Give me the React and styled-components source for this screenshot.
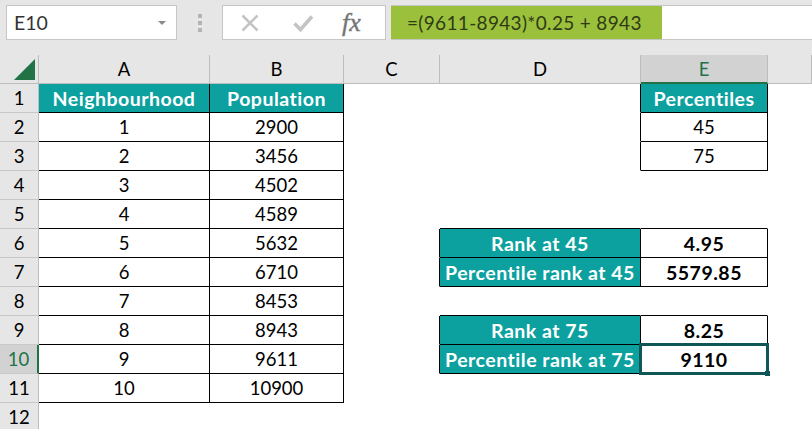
import styled, { createGlobalStyle } from "styled-components";

const GlobalStyle = createGlobalStyle`
  html, body {
    margin: 0;
    padding: 0;
    overflow: hidden;
    background: #fff;
  }
  body {
    font-family: "Lato", "Liberation Sans", sans-serif;
    color: #000;
  }
`;

const Page = styled.div`
  width: 812px;
  height: 429px;
  overflow: hidden;
  background: #fff;
`;

const FormulaBar = styled.div`
  height: 55px;
  box-sizing: border-box;
  padding: 5px 0 0 6px;
  background: #e6e6e6;
  display: flex;
  align-items: flex-start;
`;

const NameBox = styled.div`
  width: 171px;
  height: 35px;
  box-sizing: border-box;
  border: 1px solid #c6c6c6;
  background: #fff;
  display: flex;
  align-items: center;
  justify-content: space-between;
  padding: 0 10px 0 7px;
  font-size: 19.5px;
  color: #333;
`;

const Caret = styled.span`
  width: 0;
  height: 0;
  border-left: 4px solid transparent;
  border-right: 4px solid transparent;
  border-top: 4px solid #8a8a8a;
`;

const Grip = styled.div`
  width: 45px;
  height: 35px;
  display: flex;
  flex-direction: column;
  align-items: center;
  justify-content: center;
  gap: 3px;
`;

const GripDot = styled.span`
  width: 4px;
  height: 4px;
  background: #b4b4b4;
`;

const ButtonGroup = styled.div`
  width: 164px;
  height: 35px;
  box-sizing: border-box;
  border: 1px solid #c6c6c6;
  background: #fff;
  display: flex;
  align-items: center;
  padding-left: 16px;
`;

const BarIcon = styled.svg`
  width: 22px;
  height: 22px;
  margin-right: 31px;
`;

const FxLabel = styled.span`
  font-family: "Liberation Serif", serif;
  font-style: italic;
  font-size: 26px;
  color: #757575;
  -webkit-text-stroke: 0.4px #757575;
  margin-left: -3px;
`;

const FormulaInput = styled.div`
  flex: 1;
  margin-left: 5px;
  height: 35px;
  box-sizing: border-box;
  border-top: 1px solid #c6c6c6;
  border-bottom: 1px solid #c6c6c6;
  background: #fff;
`;

const FormulaText = styled.div`
  width: 271px;
  height: 33px;
  box-sizing: border-box;
  padding-left: 16px;
  background: #9bc13c;
  color: #2f3a16;
  font-size: 19px;
  letter-spacing: 0.33px;
  line-height: 33px;
  white-space: nowrap;
`;

const Sheet = styled.div`
  display: grid;
  grid-template-columns: 39px 171px 134px 96px 201px 127px 44px;
  grid-auto-rows: 29px;
  font-size: 18.5px;
`;

const Corner = styled.div`
  background: #e6e6e6;
  border-right: 1px solid #bdbdbd;
  border-bottom: 1px solid #bdbdbd;
  box-sizing: border-box;
  display: flex;
  align-items: flex-end;
  justify-content: flex-end;
  padding: 0 3px 3px 0;
`;

const ColumnHead = styled.div`
  box-sizing: border-box;
  display: flex;
  align-items: center;
  justify-content: center;
  background: ${(props) => (props.$active ? "#d2d2d2" : "#e6e6e6")};
  color: ${(props) => (props.$active ? "#217346" : "#000")};
  border-right: 1px solid #bdbdbd;
  border-bottom: ${(props) => (props.$active ? "2px solid #217346" : "1px solid #bdbdbd")};
`;

const RowHead = styled.div`
  box-sizing: border-box;
  display: flex;
  align-items: center;
  justify-content: center;
  background: ${(props) => (props.$active ? "#d2d2d2" : "#e6e6e6")};
  color: ${(props) => (props.$active ? "#217346" : "#000")};
  border-right: ${(props) => (props.$active ? "2px solid #217346" : "1px solid #bdbdbd")};
  border-bottom: 1px solid #c8c8c8;
`;

const Cell = styled.div`
  position: relative;
  box-sizing: border-box;
  display: flex;
  align-items: center;
  justify-content: center;
  white-space: nowrap;
  background: ${(props) => (props.$kind === "head" ? "#0ca19f" : "#fff")};
  color: ${(props) => (props.$kind === "head" ? "#fff" : "#000")};
  font-weight: ${(props) => (props.$kind === "head" || props.$kind === "bold" ? 700 : 400)};
  font-size: ${(props) => (props.$kind === "head" || props.$kind === "bold" ? "19.5px" : "inherit")};
  letter-spacing: ${(props) => (props.$kind === "head" || props.$kind === "bold" ? "0.5px" : "normal")};
  border-right: 1px solid ${(props) => (props.$right ? "#000" : "transparent")};
  border-bottom: 1px solid ${(props) => (props.$bottom ? "#000" : "transparent")};
`;

const Selection = styled.div`
  position: absolute;
  z-index: 2;
  left: -2px;
  top: -2px;
  right: -2px;
  bottom: -2px;
  border: 3px solid #0f5757;
  pointer-events: none;

  &::after {
    content: "";
    position: absolute;
    right: -4px;
    bottom: -4px;
    width: 5px;
    height: 5px;
    background: #0f5757;
  }
`;

const columns = ["A", "B", "C", "D", "E", "F"];

// sparse cell data, the rest of the sheet is empty
const cells = {
  A1: { text: "Neighbourhood", kind: "head" },
  B1: { text: "Population", kind: "head" },
  E1: { text: "Percentiles", kind: "head" },
  E2: { text: "45" },
  E3: { text: "75" },
  D6: { text: "Rank at 45", kind: "head" },
  E6: { text: "4.95", kind: "bold" },
  D7: { text: "Percentile rank at 45", kind: "head" },
  E7: { text: "5579.85", kind: "bold" },
  D9: { text: "Rank at 75", kind: "head" },
  E9: { text: "8.25", kind: "bold" },
  D10: { text: "Percentile rank at 75", kind: "head" },
  E10: { text: "9110", kind: "bold", selected: true },
};

[2900, 3456, 4502, 4589, 5632, 6710, 8453, 8943, 9611, 10900].forEach((value, i) => {
  cells[`A${i + 2}`] = { text: i + 1 };
  cells[`B${i + 2}`] = { text: value };
});

const getBorders = (col, row) => {
  const here = cells[`${col}${row}`];
  const next = columns[columns.indexOf(col) + 1];
  const right = here || (next && cells[`${next}${row}`]);
  const bottom = here || cells[`${col}${row + 1}`];
  return { right: Boolean(right), bottom: Boolean(bottom && (here || row > 1)) };
};

function App() {
  const rows = Array.from({ length: 12 }, (_, i) => i + 1);

  return (
    <Page>
      <GlobalStyle />
      <FormulaBar>
        <NameBox>
          E10
          <Caret />
        </NameBox>
        <Grip>
          <GripDot />
          <GripDot />
          <GripDot />
        </Grip>
        <ButtonGroup>
          <BarIcon viewBox="0 0 22 22">
            <path d="M3.5 3.5 L18.5 18.5 M18.5 3.5 L3.5 18.5" stroke="#c4c4c4" strokeWidth="2.6" fill="none" />
          </BarIcon>
          <BarIcon viewBox="0 0 22 22">
            <path d="M2.5 11.5 L8.5 17.5 L20 4.5" stroke="#c4c4c4" strokeWidth="3.6" fill="none" />
          </BarIcon>
          <FxLabel>fx</FxLabel>
        </ButtonGroup>
        <FormulaInput>
          <FormulaText>=(9611-8943)*0.25 + 8943</FormulaText>
        </FormulaInput>
      </FormulaBar>
      <Sheet>
        <Corner>
          <svg width="21" height="21" viewBox="0 0 21 21">
            <path d="M21 0 V21 H0 Z" fill="#217346" />
          </svg>
        </Corner>
        {columns.map((col) => (
          <ColumnHead key={col} $active={col === "E"}>
            {col === "F" ? "" : col}
          </ColumnHead>
        ))}
        {rows.map((row) => [
          <RowHead key={`head-${row}`} $active={row === 10}>
            {row}
          </RowHead>,
          ...columns.map((col) => {
            const cell = cells[`${col}${row}`];
            const borders = getBorders(col, row);
            return (
              <Cell key={`${col}${row}`} $kind={cell?.kind} $right={borders.right} $bottom={borders.bottom}>
                {cell?.text}
                {cell?.selected && <Selection />}
              </Cell>
            );
          }),
        ])}
      </Sheet>
    </Page>
  );
}

export default App;
